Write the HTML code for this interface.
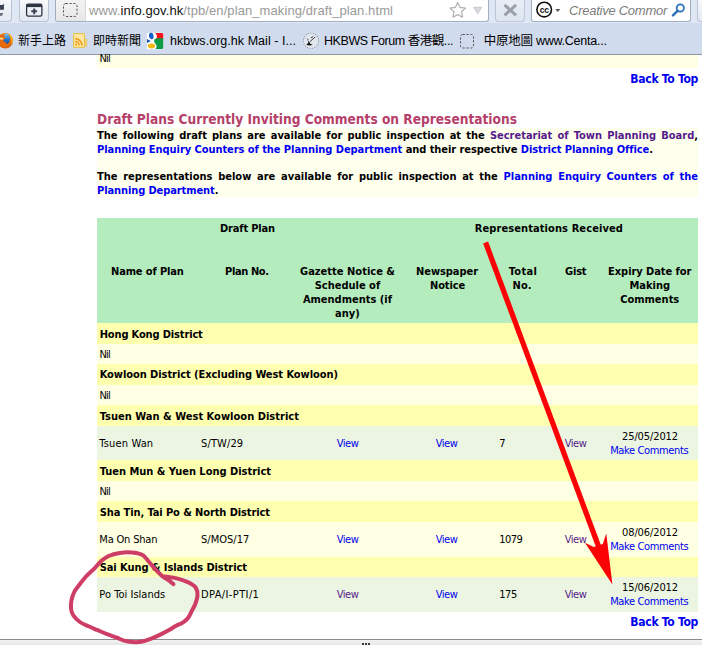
<!DOCTYPE html>
<html lang="en">
<head>
<meta charset="utf-8">
<title>Town Planning Board - Draft Plans</title>
<style>
html,body{margin:0;padding:0;}
body{width:702px;height:645px;position:relative;overflow:hidden;background:#fff;
  font-family:"DejaVu Sans Condensed","Liberation Sans",sans-serif;}
.abs,.t,.bg{position:absolute;}
.t{white-space:nowrap;line-height:normal;}
.t a{color:#0000f4;text-decoration:none;}
.t a.v{color:#551a8b;}
/* browser chrome */
#nav{left:0;top:0;width:702px;height:23px;background:#dfe7f4;}
#bm{left:0;top:23px;width:702px;height:31px;background:#d1dbee;}
#chromeline{left:0;top:54px;width:702px;height:1px;background:#8e97a8;}
.btn{border:1px solid #b9c3d4;border-top:none;border-radius:0 0 4px 4px;
  background:linear-gradient(#f6f8fb,#e3e9f2);box-sizing:border-box;}
.field{border:1px solid #a3adc0;border-top:none;border-radius:0 0 3px 3px;background:#fff;box-sizing:border-box;}
/* page */
.y1{background:#ffffb0;} .y2{background:#ffffe4;} .g1{background:#b4ecbe;} .g2{background:#ebf5e1;}
#statusbar{left:0;top:639px;width:702px;height:6px;background:linear-gradient(#f3f3f3,#e6e6e6);border-top:1px solid #8c8c8c;box-sizing:border-box;}
</style>
</head>
<body>
<!-- ===== browser chrome ===== -->
<div id="nav" class="abs"></div>
<div id="bm" class="abs"></div>
<div id="chromeline" class="abs"></div>
<div class="abs btn" style="left:-4px;top:0;width:16px;height:22px;"></div>
<div class="abs btn" style="left:19px;top:0;width:30px;height:22px;"></div>
<div class="abs field" style="left:55px;top:0;width:434px;height:22px;"></div>
<div class="abs" style="left:56px;top:0;width:29px;height:21px;background:linear-gradient(#f3f3f3,#e7e7e7);border-right:1px solid #d9d9d9;border-radius:0 0 0 3px;"></div>
<div class="abs btn" style="left:495px;top:0;width:30px;height:22px;border-color:#bcc6d7;background:linear-gradient(#e9eef6,#dde5f0);"></div>
<div class="abs field" style="left:531px;top:0;width:160px;height:22px;"></div>
<div class="abs btn" style="left:697px;top:0;width:16px;height:22px;"></div>
<svg class="abs" style="left:0;top:0" width="702" height="56" viewBox="0 0 702 56">
  <!-- button 1 partial icon -->
  <path d="M0 5 L2.600 5 L3.900 3.400 L3.900 9.700 L0 9.700 Z" fill="#3a4152"/>
  <path d="M0 13 L3.300 13 L2 15.700 L0 15.900 Z" fill="#6a707c"/>
  <!-- new tab group icon -->
  <rect x="26.6" y="4.1" width="15.3" height="12" rx="1.6" fill="none" stroke="#2d3342" stroke-width="1.3"/>
  <rect x="26.6" y="4.1" width="15.3" height="3" fill="#2d3342"/>
  <path d="M34.200 8.400 v5.800 M31.300 11.300 h5.800" stroke="#3d4350" stroke-width="2" fill="none"/>
  <!-- identity dashed box -->
  <rect x="63.5" y="3.5" width="13.5" height="13" rx="2.2" fill="none" stroke="#555" stroke-width="1" stroke-dasharray="2.2 1.6"/>
  <!-- star -->
  <path d="M457.7 2.4 L460.1 7.4 L465.5 8.1 L461.5 11.8 L462.5 17.2 L457.7 14.6 L452.9 17.2 L453.9 11.8 L449.9 8.1 L455.3 7.4Z" fill="#fcfcfc" stroke="#b0b0b0" stroke-width="1.2" stroke-linejoin="round"/>
  <path d="M473.6 7.3 h8.2 l-4.1 6.4z" fill="#d8dadd" stroke="#bfc2c7" stroke-width=".8"/>
  <!-- stop X -->
  <path d="M504.5 4.8 l11.5 10.6 M516 4.8 l-11.5 10.6" stroke="#9a9fa8" stroke-width="3" fill="none"/>
  <!-- cc icon -->
  <circle cx="544.2" cy="9.6" r="7.3" fill="#fff" stroke="#111" stroke-width="1.6"/>
  <text x="544.2" y="12.6" font-family="Liberation Sans, sans-serif" font-size="8.6" font-weight="bold" text-anchor="middle" fill="#111" letter-spacing="-0.4">cc</text>
  <path d="M555.3 9 h5 l-2.5 3z" fill="#555"/>
  <!-- magnifier -->
  <circle cx="680.3" cy="8" r="3.6" fill="#fff" stroke="#2f6fb5" stroke-width="1.8"/>
  <path d="M677.6 10.8 l-4.6 4.6" stroke="#2f6fb5" stroke-width="2.4" stroke-linecap="round"/>
  <!-- firefox icon -->
  <defs>
    <radialGradient id="ffo" cx="0.45" cy="0.35" r="0.75"><stop offset="0" stop-color="#f7a21b"/><stop offset="0.6" stop-color="#ea6f0e"/><stop offset="1" stop-color="#c4500a"/></radialGradient>
    <linearGradient id="ffb" x1="0" y1="0" x2="0" y2="1"><stop offset="0" stop-color="#7cc7ee"/><stop offset="0.5" stop-color="#2a7fd2"/><stop offset="1" stop-color="#174a9c"/></linearGradient>
  </defs>
  <circle cx="5.2" cy="40.7" r="7.8" fill="url(#ffo)"/>
  <ellipse cx="6.2" cy="38.8" rx="3.9" ry="5.3" fill="url(#ffb)"/>
  <path d="M8.6 33.6 C12.6 35.6 13.6 41 11.6 45 C11.8 41 11.2 37 8.6 33.6z" fill="#fdc321"/>
  <path d="M-1 35.2 L2.6 34.2 L4.9 35.6 L4.2 37.4 L5.8 38.2 L3.4 39.8 L3.6 41.6 L6.6 42.8 L5.2 44.6 L7.4 45.6 L5 47.4 L-1 46.6z" fill="#e8690d"/>
  <path d="M0 37.6 L3.6 38 L3 39.8 L0 39.6z" fill="#fbd07a"/>
  <!-- rss folder -->
  <rect x="73.6" y="33.6" width="11" height="14" rx="0.8" fill="#fbe7a2" stroke="#e6bd3e" stroke-width="1"/>
  <rect x="84.9" y="39.2" width="1.9" height="7" rx="0.6" fill="#f7da7a" stroke="#e3bb45" stroke-width=".6"/>
  <circle cx="76.2" cy="44.6" r="1.05" fill="#f39a12"/>
  <path d="M75.2 41.6 a4 4 0 0 1 4 4 M75.2 38.8 a6.8 6.8 0 0 1 6.8 6.8" stroke="#f39a12" stroke-width="1.5" fill="none"/>
  <!-- google icon -->
  <rect x="146.8" y="32.8" width="16.4" height="16.4" rx="1" fill="#fff"/>
  <path d="M155.2 33 h7.2 l.8 .9 v5.3 h-7.2 c1.4-2 1.2-4.4-.8-6.2z" fill="#f5141b"/>
  <path d="M154.6 39.2 c1-.8 2.6-1 3.6-1 h5 v10 l-.9 .9 h-6.9 c1.600-1.400 1.500-3.600 .4-5 c-1-1.300-2.400-2.400-1.200-4.900z" fill="#0d9a47"/>
  <ellipse cx="151.3" cy="36" rx="2.3" ry="3.3" fill="#1161c9" transform="rotate(-8 151.3 36)"/>
  <path d="M147 38.9 l3.800 2.200 l-3.800 1.900z" fill="#1653b5"/>
  <ellipse cx="151.5" cy="46" rx="3.6" ry="2.4" fill="#f4b813"/>
  <!-- hkbws icon -->
  <circle cx="311" cy="40.800" r="7.600" fill="#e3e7ee" stroke="#8d9097" stroke-width="1.100" stroke-dasharray="1 1.500"/>
  <path d="M306.400 45 l2.600-3.400 l1.400 2.200 l2.400 1.200 l-3 .6z" fill="#161616"/>
  <path d="M310.200 41.400 l4.800-4.200 M307.200 38.800 l.8 .8 M308 41 l.8 .6 M312.800 36.800 l-1.600 .8" stroke="#3c3f46" stroke-width="1" fill="none" stroke-linecap="round"/>
  <!-- dashed bookmark icon -->
  <rect x="460.5" y="34.5" width="13" height="13.5" rx="2.2" fill="none" stroke="#555" stroke-width="1" stroke-dasharray="2.2 1.6"/>
</svg>

<!-- ===== page backgrounds ===== -->
<div class="bg y2" style="left:97px;top:55px;width:601px;height:13px;"></div>
<div class="bg" style="left:97px;top:128px;width:601px;height:69px;background:#ffffee;"></div>
<div class="bg g1" style="left:97px;top:218px;width:601px;height:105px;"></div>
<div class="bg y1" style="left:97px;top:323px;width:601px;height:21px;"></div>
<div class="bg y2" style="left:97px;top:344px;width:601px;height:20px;"></div>
<div class="bg y1" style="left:97px;top:364px;width:601px;height:21px;"></div>
<div class="bg y2" style="left:97px;top:385px;width:601px;height:20px;"></div>
<div class="bg y1" style="left:97px;top:405px;width:601px;height:21px;"></div>
<div class="bg g2" style="left:97px;top:426px;width:601px;height:34px;"></div>
<div class="bg y1" style="left:97px;top:460px;width:601px;height:21px;"></div>
<div class="bg y2" style="left:97px;top:481px;width:601px;height:20px;"></div>
<div class="bg y1" style="left:97px;top:501px;width:601px;height:21px;"></div>
<div class="bg y2" style="left:97px;top:522px;width:601px;height:35px;"></div>
<div class="bg y1" style="left:97px;top:557px;width:601px;height:20px;"></div>
<div class="bg g2" style="left:97px;top:577px;width:601px;height:35px;"></div>
<div id="statusbar" class="abs"></div>
<div class="abs" style="left:362px;top:643px;width:8px;height:2px;background:repeating-linear-gradient(90deg,#3c3c3c 0 2px,transparent 2px 3px);"></div>

<!-- ===== texts ===== -->
<span class="t" style="left:99.5px;top:52.0px;font-size:11px;color:#000;letter-spacing:-0.835px;">Nil</span>
<span class="t" style="left:630.3px;top:71.7px;font-size:12px;color:#0000ee;font-weight:bold;letter-spacing:-0.274px;">Back To Top</span>
<span class="t" style="left:97.0px;top:111.0px;font-size:13.6px;color:#b5406a;font-weight:bold;">Draft Plans Currently Inviting Comments on Representations</span>
<span class="t" style="left:220.0px;top:222.0px;font-size:11px;color:#000;font-weight:bold;letter-spacing:-0.163px;">Draft Plan</span>
<span class="t" style="left:474.7px;top:222.0px;font-size:11px;color:#000;font-weight:bold;letter-spacing:0.098px;">Representations Received</span>
<span class="t" style="left:111.0px;top:265.0px;font-size:11px;color:#000;font-weight:bold;letter-spacing:-0.137px;">Name of Plan</span>
<span class="t" style="left:225.0px;top:265.0px;font-size:11px;color:#000;font-weight:bold;letter-spacing:-0.370px;">Plan No.</span>
<span class="t" style="left:300.0px;top:265.0px;font-size:11px;color:#000;font-weight:bold;letter-spacing:0.016px;">Gazette Notice &amp;</span>
<span class="t" style="left:314.7px;top:279.0px;font-size:11px;color:#000;font-weight:bold;">Schedule of</span>
<span class="t" style="left:302.9px;top:293.0px;font-size:11px;color:#000;font-weight:bold;">Amendments (if</span>
<span class="t" style="left:335.1px;top:307.0px;font-size:11px;color:#000;font-weight:bold;">any)</span>
<span class="t" style="left:416.0px;top:265.0px;font-size:11px;color:#000;font-weight:bold;letter-spacing:-0.054px;">Newspaper</span>
<span class="t" style="left:430.0px;top:279.0px;font-size:11px;color:#000;font-weight:bold;letter-spacing:-0.133px;">Notice</span>
<span class="t" style="left:508.7px;top:265.0px;font-size:11px;color:#000;font-weight:bold;letter-spacing:0.342px;">Total</span>
<span class="t" style="left:512.6px;top:279.0px;font-size:11px;color:#000;font-weight:bold;">No.</span>
<span class="t" style="left:565.1px;top:265.0px;font-size:11px;color:#000;font-weight:bold;letter-spacing:-0.210px;">Gist</span>
<span class="t" style="left:608.1px;top:265.0px;font-size:11px;color:#000;font-weight:bold;letter-spacing:-0.058px;">Expiry Date for</span>
<span class="t" style="left:629.4px;top:279.0px;font-size:11px;color:#000;font-weight:bold;">Making</span>
<span class="t" style="left:620.2px;top:293.0px;font-size:11px;color:#000;font-weight:bold;">Comments</span>
<span class="t" style="left:99.7px;top:328.0px;font-size:11px;color:#000;font-weight:bold;letter-spacing:-0.145px;">Hong Kong District</span>
<span class="t" style="left:99.5px;top:347.6px;font-size:11px;color:#000;letter-spacing:-0.835px;">Nil</span>
<span class="t" style="left:99.7px;top:368.0px;font-size:11px;color:#000;font-weight:bold;letter-spacing:-0.062px;">Kowloon District (Excluding West Kowloon)</span>
<span class="t" style="left:99.5px;top:388.6px;font-size:11px;color:#000;letter-spacing:-0.835px;">Nil</span>
<span class="t" style="left:99.7px;top:410.0px;font-size:11px;color:#000;font-weight:bold;letter-spacing:0.024px;">Tsuen Wan &amp; West Kowloon District</span>
<span class="t" style="left:99.7px;top:465.0px;font-size:11px;color:#000;font-weight:bold;letter-spacing:-0.012px;">Tuen Mun &amp; Yuen Long District</span>
<span class="t" style="left:99.5px;top:484.6px;font-size:11px;color:#000;letter-spacing:-0.835px;">Nil</span>
<span class="t" style="left:99.7px;top:506.0px;font-size:11px;color:#000;font-weight:bold;letter-spacing:-0.097px;">Sha Tin, Tai Po &amp; North District</span>
<span class="t" style="left:99.7px;top:561.0px;font-size:11px;color:#000;font-weight:bold;letter-spacing:-0.064px;">Sai Kung &amp; Islands District</span>
<span class="t" style="left:99.3px;top:436.7px;font-size:11px;color:#000;letter-spacing:0.158px;">Tsuen Wan</span>
<span class="t" style="left:201.0px;top:436.7px;font-size:11px;color:#000;letter-spacing:0.132px;">S/TW/29</span>
<span class="t" style="left:336.7px;top:436.7px;font-size:11px;color:#0000f0;letter-spacing:-0.467px;">View</span>
<span class="t" style="left:435.7px;top:436.7px;font-size:11px;color:#0000f0;letter-spacing:-0.467px;">View</span>
<span class="t" style="left:499.3px;top:436.7px;font-size:11px;color:#000;letter-spacing:-0.797px;">7</span>
<span class="t" style="left:564.7px;top:436.7px;font-size:11px;color:#551a8b;letter-spacing:-0.467px;">View</span>
<span class="t" style="left:622.0px;top:430.0px;font-size:11px;color:#000;letter-spacing:-0.103px;">25/05/2012</span>
<span class="t" style="left:610.2px;top:444.1px;font-size:11px;color:#0000f0;letter-spacing:-0.371px;">Make Comments</span>
<span class="t" style="left:99.3px;top:532.5px;font-size:11px;color:#000;letter-spacing:-0.186px;">Ma On Shan</span>
<span class="t" style="left:201.0px;top:532.5px;font-size:11px;color:#000;letter-spacing:0.016px;">S/MOS/17</span>
<span class="t" style="left:336.7px;top:532.5px;font-size:11px;color:#0000f0;letter-spacing:-0.467px;">View</span>
<span class="t" style="left:435.7px;top:532.5px;font-size:11px;color:#0000f0;letter-spacing:-0.467px;">View</span>
<span class="t" style="left:499.3px;top:532.5px;font-size:11px;color:#000;letter-spacing:-0.547px;">1079</span>
<span class="t" style="left:564.7px;top:532.5px;font-size:11px;color:#551a8b;letter-spacing:-0.467px;">View</span>
<span class="t" style="left:622.0px;top:525.8px;font-size:11px;color:#000;letter-spacing:-0.103px;">08/06/2012</span>
<span class="t" style="left:610.2px;top:539.9px;font-size:11px;color:#0000f0;letter-spacing:-0.371px;">Make Comments</span>
<span class="t" style="left:99.3px;top:587.5px;font-size:11px;color:#000;letter-spacing:0.036px;">Po Toi Islands</span>
<span class="t" style="left:201.0px;top:587.5px;font-size:11px;color:#000;letter-spacing:0.387px;">DPA/I-PTI/1</span>
<span class="t" style="left:336.7px;top:587.5px;font-size:11px;color:#551a8b;letter-spacing:-0.467px;">View</span>
<span class="t" style="left:435.7px;top:587.5px;font-size:11px;color:#0000f0;letter-spacing:-0.467px;">View</span>
<span class="t" style="left:499.3px;top:587.5px;font-size:11px;color:#000;letter-spacing:-0.497px;">175</span>
<span class="t" style="left:564.7px;top:587.5px;font-size:11px;color:#551a8b;letter-spacing:-0.467px;">View</span>
<span class="t" style="left:622.0px;top:580.8px;font-size:11px;color:#000;letter-spacing:-0.103px;">15/06/2012</span>
<span class="t" style="left:610.2px;top:594.9px;font-size:11px;color:#0000f0;letter-spacing:-0.371px;">Make Comments</span>
<span class="t" style="left:630.3px;top:614.7px;font-size:12px;color:#0000ee;font-weight:bold;letter-spacing:-0.274px;">Back To Top</span>
<span class="t" style="left:89.0px;top:3.0px;font-size:13px;color:#000;font-family:'Liberation Sans',sans-serif;letter-spacing:0.087px;"><span style="color:#999">www.</span><span style="color:#111">info.gov.hk</span><span style="color:#999">/tpb/en/plan_making/draft_plan.html</span></span>
<span class="t" style="left:569.0px;top:3.0px;font-size:13px;color:#7c7c7c;font-family:'Liberation Sans',sans-serif;font-style:italic;letter-spacing:-0.257px;">Creative Commor</span>
<span class="t" style="left:18.0px;top:31.4px;font-size:12px;color:#000;font-family:'Liberation Sans','Noto Sans CJK TC',sans-serif;">新手上路</span>
<span class="t" style="left:93.0px;top:31.4px;font-size:12px;color:#000;font-family:'Liberation Sans','Noto Sans CJK TC',sans-serif;">即時新聞</span>
<span class="t" style="left:170.0px;top:34.4px;font-size:12.5px;color:#000;font-family:'Liberation Sans','Noto Sans CJK TC',sans-serif;letter-spacing:0.040px;">hkbws.org.hk Mail - I...</span>
<span class="t" style="left:324.0px;top:30.4px;font-size:12.5px;color:#000;font-family:'Liberation Sans','Noto Sans CJK TC',sans-serif;letter-spacing:-0.435px;">HKBWS Forum 香港觀...</span>
<span class="t" style="left:483.7px;top:30.4px;font-size:12.5px;color:#000;font-family:'Liberation Sans','Noto Sans CJK TC',sans-serif;letter-spacing:-0.243px;">中原地圖 www.Centa...</span>
<span class="t" style="left:97.0px;top:129.3px;font-size:11px;color:#000;font-weight:bold;word-spacing:1.723px;">The following draft plans are available for public inspection at the <a class="v">Secretariat of Town Planning Board</a>,</span>
<span class="t" style="left:97.0px;top:143.0px;font-size:11px;color:#000;font-weight:bold;letter-spacing:-0.058px;"><a>Planning Enquiry Counters of the Planning Department</a> and their respective <a>District Planning Office</a>.</span>
<span class="t" style="left:97.0px;top:170.0px;font-size:11px;color:#000;font-weight:bold;word-spacing:2.282px;">The representations below are available for public inspection at the <a>Planning Enquiry Counters of the</a></span>
<span class="t" style="left:97.0px;top:184.0px;font-size:11px;color:#000;font-weight:bold;letter-spacing:-0.098px;"><a>Planning Department</a>.</span>

<!-- ===== annotations ===== -->
<svg class="abs" style="left:0;top:0;pointer-events:none" width="702" height="645" viewBox="0 0 702 645">
  <line x1="485.6" y1="242.5" x2="598.6" y2="546.5" stroke="#fb0207" stroke-width="5.3" stroke-linecap="butt"/>
  <path d="M612.4 584.6 L584.9 542.8 L593.8 546.9 L602.8 544.1 L606.3 533.5 Z" fill="#fb0207"/>
  <path d="M163.0 576.3 C164.8 576.5 170.2 577.0 173.5 577.6 C176.8 578.2 179.8 579.2 182.7 580.2 C185.5 581.2 188.4 582.2 190.6 583.5 C192.8 584.8 194.8 585.9 195.9 587.9 C197.1 589.9 197.6 593.0 197.5 595.6 C197.4 598.2 196.4 601.0 195.5 603.5 C194.6 606.0 193.2 608.3 191.9 610.7 C190.7 613.1 189.5 616.0 188.0 618.0 C186.5 620.0 184.7 621.3 182.7 622.6 C180.7 623.9 178.3 624.5 176.1 625.7 C173.9 626.9 172.1 628.3 169.5 629.8 C166.9 631.3 163.4 633.1 160.3 634.6 C157.2 636.1 154.4 637.4 151.2 638.6 C148.0 639.8 144.3 641.1 141.2 641.7 C138.1 642.3 135.4 642.2 132.6 642.0 C129.8 641.8 126.7 641.3 124.1 640.6 C121.5 639.9 119.8 638.8 117.0 637.7 C114.2 636.6 110.3 635.4 107.0 634.1 C103.7 632.8 100.1 631.2 97.0 629.9 C93.9 628.6 91.3 627.6 88.5 626.3 C85.7 625.0 82.4 623.8 79.9 622.0 C77.4 620.2 75.0 617.7 73.5 615.6 C72.0 613.5 71.4 611.7 71.1 609.2 C70.8 606.7 70.9 603.6 71.4 600.7 C71.9 597.9 72.9 594.7 74.2 592.1 C75.5 589.5 77.2 587.6 79.2 585.0 C81.2 582.4 83.4 579.4 86.0 576.5 C88.6 573.6 92.5 570.4 95.0 567.8 C97.5 565.2 98.9 563.0 101.2 561.0 C103.5 559.0 105.5 557.4 108.6 556.0 C111.7 554.6 115.9 553.5 119.8 552.9 C123.7 552.3 128.5 552.2 132.2 552.5 C135.9 552.8 139.4 553.4 142.1 554.8 C144.8 556.2 146.2 558.7 148.3 561.0 C150.4 563.3 152.3 565.9 154.6 568.4 C156.9 570.9 159.5 573.8 162.0 575.9 C164.5 578.0 167.5 579.4 169.4 580.8 C171.3 582.2 172.8 583.6 173.5 584.2"
    fill="none" stroke="#cd3d65" stroke-width="4" stroke-linecap="round" stroke-linejoin="round"/>
</svg>
</body>
</html>
